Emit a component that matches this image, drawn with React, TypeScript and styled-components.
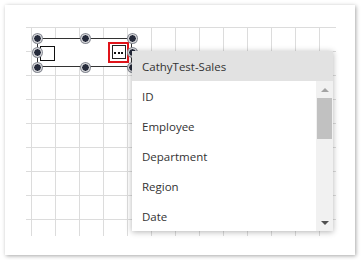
import { createGlobalStyle, styled } from "styled-components";

const GlobalStyle = createGlobalStyle`
  body {
    margin: 0;
    background: #fff;
    font-family: "Open Sans", "Noto Sans", sans-serif;
  }
`;

const Page = styled.div`
  padding: 5px;
`;

const Panel = styled.div`
  width: 350px;
  height: 250px;
  box-sizing: border-box;
  padding: 22px 0 0 21px;
  background: #fff;
  box-shadow: 1px 1px 4px rgba(0, 0, 0, 0.35);
`;

const Canvas = styled.div`
  position: relative;
  width: 310px;
  height: 209px;
  background-image: linear-gradient(to right, #dcdcdc 1px, transparent 1px),
    linear-gradient(to bottom, #dcdcdc 1px, transparent 1px);
  background-size: 24px 24px, 24px 24px;
  background-position: 5px 0, 0 0;
`;

const Frame = styled.div`
  position: absolute;
  left: 11px;
  top: 11px;
  width: 95px;
  height: 29px;
  box-sizing: border-box;
  border: 1px solid #333;
  display: flex;
  align-items: center;
  justify-content: space-between;
  padding: 0 2px 0 2px;
  background: #fff;
`;

const Box = styled.div`
  width: 15px;
  height: 15px;
  box-sizing: border-box;
  border: 1.5px solid #111;
  margin-top: 1px;
`;

const MoreButton = styled.div`
  width: 21px;
  height: 21px;
  box-sizing: border-box;
  border: 2.5px solid #e0141a;
  display: flex;
  align-items: center;
  justify-content: center;
  background: #fff;
  margin-top: -1px;
`;

const MoreInner = styled.div`
  width: 14px;
  height: 14px;
  box-sizing: border-box;
  border: 1px solid #222;
  display: flex;
  align-items: center;
  justify-content: center;
  gap: 1.5px;
  padding-top: 2px;
`;

const Dot = styled.span`
  width: 2px;
  height: 2px;
  background: #111;
`;

const Handle = styled.div<{ $x: number; $y: number }>`
  position: absolute;
  left: ${(p) => p.$x - 4.5}px;
  top: ${(p) => p.$y - 4.5}px;
  width: 9px;
  height: 9px;
  box-sizing: border-box;
  border-radius: 50%;
  background: #262b3b;
  border: 1px solid #fff;
  box-shadow: 0 0 0 1px #8a8d96;
`;

const Menu = styled.div`
  position: absolute;
  left: 106px;
  top: 24px;
  width: 201px;
  background: #fff;
  box-shadow: 0 1px 6px rgba(0, 0, 0, 0.3);
  z-index: 2;
`;

const Header = styled.div`
  height: 30px;
  display: flex;
  align-items: center;
  padding-left: 10px;
  background: #e2e2e2;
  color: #333;
  font-size: 11.5px;
`;

const ListArea = styled.div`
  display: flex;
  height: 150px;
`;

const Items = styled.div`
  flex: 1;
`;

const Item = styled.div`
  height: 30px;
  display: flex;
  align-items: center;
  padding-left: 10px;
  color: #333;
  font-size: 11.5px;
`;

const Scrollbar = styled.div`
  width: 17px;
  background: #f1f1f1;
  display: flex;
  flex-direction: column;
  align-items: center;
`;

const Arrow = styled.div<{ $down?: boolean }>`
  height: 17px;
  width: 17px;
  display: flex;
  align-items: center;
  justify-content: center;
  &::after {
    content: "";
    width: 0;
    height: 0;
    border-left: 4px solid transparent;
    border-right: 4px solid transparent;
    ${(p) =>
      p.$down
        ? "border-top: 4px solid #505050;"
        : "border-bottom: 4px solid #a3a3a3;"}
  }
`;

const Thumb = styled.div`
  width: 15px;
  height: 41px;
  background: #c1c1c1;
`;

const Spacer = styled.div`
  flex: 1;
`;

const handles = [
  [11, 11],
  [59, 11],
  [106, 11],
  [11, 25.5],
  [106, 25.5],
  [11, 40],
  [59, 40],
  [106, 40],
];

const fields = ["ID", "Employee", "Department", "Region", "Date"];

function App() {
  return (
    <Page>
      <GlobalStyle />
      <Panel>
        <Canvas>
          <Frame>
            <Box />
            <MoreButton>
              <MoreInner>
                <Dot />
                <Dot />
                <Dot />
              </MoreInner>
            </MoreButton>
          </Frame>
          {handles.map(([x, y], i) => (
            <Handle key={i} $x={x} $y={y} />
          ))}
          <Menu>
            <Header>CathyTest-Sales</Header>
            <ListArea>
              <Items>
                {fields.map((f) => (
                  <Item key={f}>{f}</Item>
                ))}
              </Items>
              <Scrollbar>
                <Arrow />
                <Thumb />
                <Spacer />
                <Arrow $down />
              </Scrollbar>
            </ListArea>
          </Menu>
        </Canvas>
      </Panel>
    </Page>
  );
}

export default App;
